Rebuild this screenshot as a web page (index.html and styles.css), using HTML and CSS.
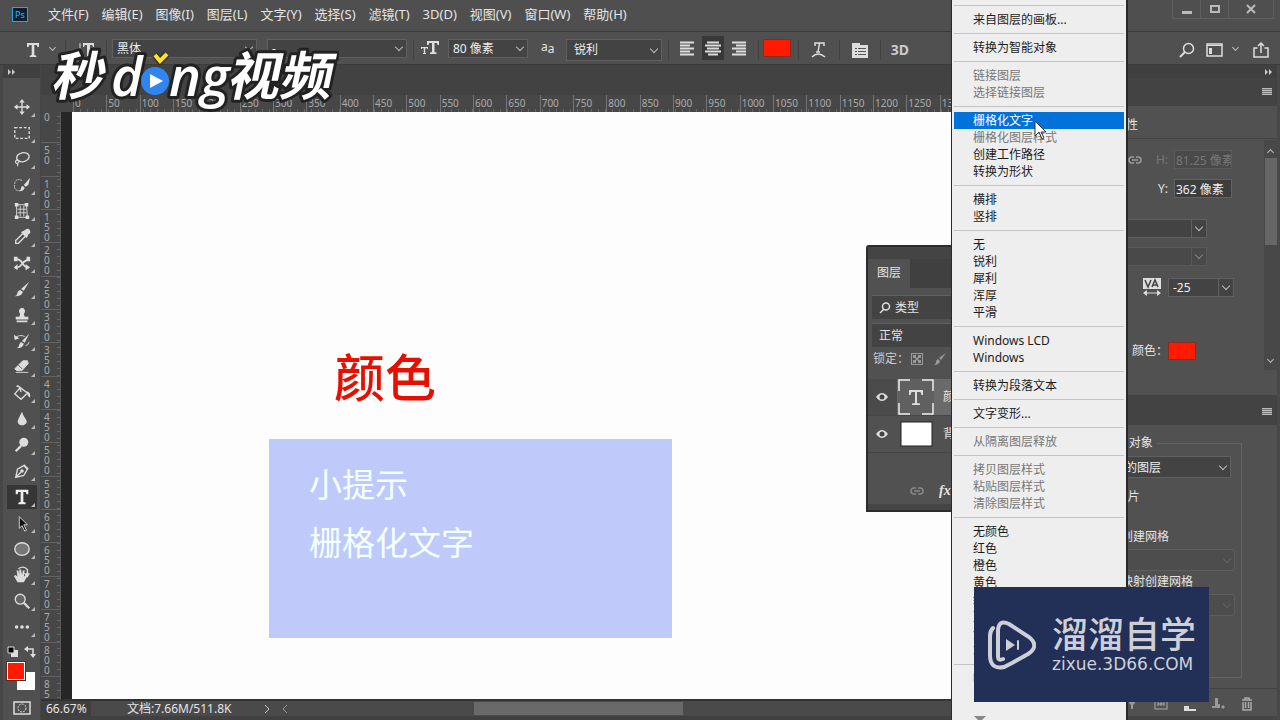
FILE: index.html
```html
<!DOCTYPE html>
<html lang="zh-CN">
<head>
    <meta charset="UTF-8">
    <meta name="viewport" content="width=device-width, initial-scale=1.0">
    <title>Photoshop</title>
    <link rel="stylesheet" href="styles.css">
</head>
<body>
    <header class="menubar">
        <div class="app-icon">Ps</div>
        <nav class="menus">
            <a href="#">文件(F)</a>
            <a href="#">编辑(E)</a>
            <a href="#">图像(I)</a>
            <a href="#">图层(L)</a>
            <a href="#">文字(Y)</a>
            <a href="#">选择(S)</a>
            <a href="#">滤镜(T)</a>
            <a href="#">3D(D)</a>
            <a href="#">视图(V)</a>
            <a href="#">窗口(W)</a>
            <a href="#">帮助(H)</a>
        </nav>
        <div class="window-buttons">
            <button aria-label="最小化"><svg width="12" height="12"><path d="M1 8h10v3H1z" fill="#bbb"/></svg></button>
            <button aria-label="最大化"><svg width="12" height="12"><rect x="2" y="3" width="8" height="6" fill="none" stroke="#bbb" stroke-width="2"/></svg></button>
            <button class="close" aria-label="关闭"><svg width="12" height="12"><path d="M2 2l8 8M10 2l-8 8" stroke="#bbb" stroke-width="2"/></svg></button>
        </div>
    </header>

    <div class="options">
        <button class="opt-tool" aria-label="文字工具"><svg width="16" height="16"><path d="M2 1h12v4h-1.500l-.8-2H9.300v10l2 .7V15H4.700v-1.300l2-.7V3H4.300l-.8 2H2z" fill="#ddd"/></svg></button>
        <i class="chevron"></i>
        <span class="sep"></span>
        <button class="opt-orient" aria-label="切换文本方向"><svg width="16" height="18"><path d="M2 2v12M0 11l2 4 2-4" fill="none" stroke="#ddd" stroke-width="1"/><path d="M5 2h11v4h-1l-.8-2H12v11h-3V4H6.800L6 6H5z" fill="#ddd"/></svg></button>
        <span class="sep"></span>
        <label class="drop font-family"><select aria-label="字体"><option>黑体</option></select></label>
        <label class="drop font-style"><select aria-label="字体样式"><option>-</option></select></label>
        <span class="sep"></span>
        <svg class="size-icon" width="18" height="16"><path d="M6 1h12v4h-1.400l-.8-2h-2.300v9l2 .6V14H9v-1.400l2-.6V3H8.300L7.500 5H6z" fill="#ddd"/><path d="M0 7h7v2H6.300L6 8.200H4.200V13H5v1H2v-1h.8V8.200H1L.7 9H0z" fill="#ddd"/></svg>
        <label class="drop font-size"><select aria-label="字号"><option>80 像素</option></select></label>
        <span class="aa">a<sub>a</sub></span>
        <label class="drop anti-alias"><select aria-label="消除锯齿"><option>锐利</option></select></label>
        <span class="sep"></span>
        <div class="align">
            <button aria-label="左对齐"><svg width="16" height="16"><path d="M1 2.500h14M1 5.500h10M1 8.500h14M1 11.500h10M1 14.500h14" stroke="#ddd" stroke-width="2"/></svg></button>
            <button class="pressed" aria-label="居中对齐"><svg width="16" height="16"><path d="M2 2.500h12M0 5.500h16M2 8.500h12M0 11.500h16M3 14.500h10" stroke="#ddd" stroke-width="2"/></svg></button>
            <button aria-label="右对齐"><svg width="16" height="16"><path d="M1 2.500h14M5 5.500h10M1 8.500h14M5 11.500h10M1 14.500h14" stroke="#ddd" stroke-width="2"/></svg></button>
        </div>
        <span class="sep"></span>
        <button class="color-box" aria-label="文本颜色"></button>
        <span class="sep"></span>
        <button class="opt-icon" aria-label="变形文字"><svg width="16" height="18"><path d="M4 5V2h9v3M8.500 2L7 11M5 11h4" fill="none" stroke="#ddd" stroke-width="1.500"/><path d="M1 16q6-6 13 0" fill="none" stroke="#ddd" stroke-width="1.500"/></svg></button>
        <span class="sep"></span>
        <button class="opt-icon" aria-label="字符面板"><svg width="18" height="18"><path d="M1 2h8v2h8v13H1z" fill="#ddd"/><path d="M4 7.500h2M7 7.500h8M4 10.500h2M7 10.500h8M4 13.500h2M7 13.500h8" stroke="#555" stroke-width="1"/></svg></button>
        <span class="sep"></span>
        <button class="opt-3d">3D</button>
        <div class="options-right">
            <button aria-label="搜索"><svg width="16" height="16"><circle cx="9.500" cy="6.500" r="5" fill="none" stroke="#ddd" stroke-width="1.500"/><path d="M6 10l-5 5" stroke="#ddd" stroke-width="2"/></svg></button>
            <button aria-label="工作区"><svg width="18" height="14"><rect x="1" y="1" width="15" height="12" fill="none" stroke="#ddd" stroke-width="1.500"/><path d="M1 2.500h15" stroke="#ddd"/><path d="M3 5h3v6H3z" fill="#ddd"/></svg></button>
            <i class="chevron"></i>
            <button aria-label="共享"><svg width="16" height="18"><path d="M4.500 7H1v9h14V7h-3.500M8 12V2M5 5l3-3 3 3" fill="none" stroke="#ddd" stroke-width="1.500"/></svg></button>
        </div>
    </div>

    <div class="workspace">
        <aside class="toolbar">
            <div class="toolbar-head"><svg width="8" height="6"><path d="M0 0l3 3-3 3zM4 0l3 3-3 3z" fill="#ccc"/></svg></div>
            <div class="tools">
                <button aria-label="移动"><svg viewBox="0 0 20 20"><path d="M10 3v14M3 10h14" stroke="#ddd" stroke-width="1.500"/><path d="M10 1l3 4H7zM10 19l3-4H7zM1 10l4-3v6zM19 10l-4-3v6z" fill="#ddd"/></svg></button>
                <button aria-label="矩形选框"><svg viewBox="0 0 20 20"><rect x="2" y="4" width="16" height="12" fill="none" stroke="#ddd" stroke-width="1.500" stroke-dasharray="3 2"/></svg></button>
                <button aria-label="套索"><svg viewBox="0 0 20 20"><ellipse cx="11" cy="8" rx="7" ry="5" fill="none" stroke="#ddd" stroke-width="1.500" transform="rotate(-12 11 8)"/><path d="M5 11q-3 1-2 3t3 0-1-3M5 14q1 2 0 4" fill="none" stroke="#ddd" stroke-width="1.300"/></svg></button>
                <button aria-label="快速选择"><svg viewBox="0 0 20 20"><path d="M10 5Q3 2 2 8t1 7q2 2 6 1" fill="none" stroke="#ddd" stroke-dasharray="2 1"/><path d="M19 2l-2 8-3 2-2-2z" fill="#ddd"/><path d="M11 11l2 2q-1 4-6 4 2-2 2-4 0-2 2-2z" fill="#ddd"/></svg></button>
                <button aria-label="透视裁剪"><svg viewBox="0 0 20 20"><path d="M4 3h11l1 14H4zM8 4v12M12 4v12M5 8h10M5 12h10" fill="none" stroke="#ddd"/><path d="M2 1h4v4H2zM13 1h4v4h-4zM2 15h4v4H2zM14 15h4v4h-4z" fill="#ddd"/></svg></button>
                <button aria-label="吸管"><svg viewBox="0 0 20 20"><path d="M11 6L3 14v3h3l8-8" fill="none" stroke="#ddd" stroke-width="1.500"/><path d="M10 4l2-1 3-2q3-1 4 2t-2 4l-1 3-1 1-6-6z" fill="#ddd"/></svg></button>
                <button aria-label="内容感知移动"><svg viewBox="0 0 20 20"><path d="M2 6h4q3 1 5 5t6 4M2 15h3q3-1 5-4t7-5" fill="none" stroke="#ddd" stroke-width="2"/><path d="M19 15l-5-4v7zM1 15l4-4v7zM1 3h4v5H1zM15 3h4v5h-4z" fill="#ddd"/></svg></button>
                <button aria-label="画笔"><svg viewBox="0 0 20 20"><path d="M18 2l-6 10-3-2z" fill="#ddd"/><path d="M8 11l3 2q-1 5-9 5 3-1 3-4 1-3 3-3z" fill="#ddd"/></svg></button>
                <button aria-label="仿制图章"><svg viewBox="0 0 20 20"><path d="M10 2a4 4 0 0 1 2 7l1 3h4v3H3v-3h4l1-3a4 4 0 0 1 2-7zM4 16h12v2H4z" fill="#ddd"/></svg></button>
                <button aria-label="历史记录画笔"><svg viewBox="0 0 20 20"><path d="M18 2l-5 10-3-2zM9 11l3 2q-1 5-8 5 3-1 3-4 1-3 2-3z" fill="#ddd"/><path d="M2 7q5-5 11-2M14 15q3 0 4-4" fill="none" stroke="#ddd"/><path d="M1 3l1 6 5-2z" fill="#ddd"/></svg></button>
                <button aria-label="橡皮擦"><svg viewBox="0 0 20 20"><path d="M11 3h5l1 3-7 8H4l-2-2zM3 16h14" fill="#ddd" stroke="#ddd"/><path d="M6 8l4 4" stroke="#555"/></svg></button>
                <button aria-label="油漆桶"><svg viewBox="0 0 20 20"><path d="M8 4l8 6-7 7-7-6zM4 3q3-3 5 6" fill="none" stroke="#ddd" stroke-width="1.500"/><path d="M15 8q5 1 4 7-3-1-4-7z" fill="#ddd"/></svg></button>
                <button aria-label="模糊"><svg viewBox="0 0 20 20"><path d="M10 2q1 4 4 8t-1 6q-3 2-6 0t-1-6 4-8z" fill="#ddd"/></svg></button>
                <button aria-label="减淡"><svg viewBox="0 0 20 20"><circle cx="12" cy="7" r="5" fill="#ddd"/><path d="M9 11l-6 6" stroke="#ddd" stroke-width="2.500"/></svg></button>
                <button aria-label="钢笔"><svg viewBox="0 0 20 20"><path d="M3 17l2-9 7-4 4 4-4 7zM12 3l5 5M3 17l6-6" fill="none" stroke="#ddd" stroke-width="1.500"/><circle cx="10" cy="10" r="2" fill="#ddd"/></svg></button>
                <button class="active" aria-label="横排文字"><svg viewBox="0 0 20 20"><path d="M3 2h14v5h-2l-.8-2.500h-2.700v11l2.500.6V18H6v-1.900l2.500-.6v-11H5.800L5 7H3z" fill="#eee"/></svg></button>
                <button aria-label="路径选择"><svg viewBox="0 0 20 20"><path d="M7 3v13l3-3 3 6 2-1-3-6h4z" fill="#111" stroke="#ddd"/></svg></button>
                <button aria-label="椭圆"><svg viewBox="0 0 20 20"><ellipse cx="10" cy="10" rx="8" ry="7" fill="#777" stroke="#ddd" stroke-width="1.500"/></svg></button>
                <button aria-label="旋转视图"><svg viewBox="0 0 20 20"><path d="M5 18l-4-7 2-1 2 2-1-7h2l1 5V4h2l1 6 1-5h2l-1 7 2-2 2 1-4 7z" fill="#ddd"/><path d="M6 3q6-4 10 1v5" fill="none" stroke="#ddd" stroke-width="1.500"/><path d="M12 8h7l-3 5z" fill="#ddd"/></svg></button>
                <button aria-label="缩放"><svg viewBox="0 0 20 20"><circle cx="8" cy="8" r="5.500" fill="#666" stroke="#ddd" stroke-width="1.500"/><path d="M12 12l6 6" stroke="#ddd" stroke-width="2.500"/></svg></button>
                <button aria-label="编辑工具栏"><svg viewBox="0 0 20 20"><circle cx="4" cy="10" r="2" fill="#ddd"/><circle cx="10" cy="10" r="2" fill="#ddd"/><circle cx="16" cy="10" r="2" fill="#ddd"/></svg></button>
            </div>
            <div class="swap">
                <svg width="12" height="12"><path d="M4 4h7v7H4z" fill="#ddd"/><path d="M1 1h6v6H1z" fill="#000" stroke="#ddd"/></svg>
                <svg width="12" height="12"><path d="M3 3h6v6" fill="none" stroke="#ddd" stroke-width="1.500"/><path d="M0 3l4-3v6zM9 12L6 8h6z" fill="#ddd"/></svg>
            </div>
            <div class="swatches">
                <button class="back" aria-label="背景色"></button>
                <button class="fore" aria-label="前景色"></button>
            </div>
            <button class="quick-mask" aria-label="快速蒙版"><svg width="18" height="14"><rect x="1" y="1" width="16" height="12" fill="none" stroke="#ddd" stroke-width="1.500"/><circle cx="9" cy="7" r="4" fill="none" stroke="#ddd" stroke-dasharray="2 1"/></svg></button>
        </aside>

        <main class="document">
            <div class="tab-strip"></div>
            <div class="ruler-x"><div class="marks" id="rulerX"></div></div>
            <div class="view">
                <div class="ruler-y"><div class="marks" id="rulerY"></div></div>
                <div class="canvas">
                    <h1 class="canvas-text">颜色</h1>
                    <section class="tip">
                        <p>小提示</p>
                        <p>栅格化文字</p>
                    </section>
                </div>
            </div>
            <footer class="status">
                <span class="zoom">66.67%</span>
                <span class="doc-size">文档:7.66M/511.8K</span>
                <svg class="next" width="6" height="10"><path d="M1 1l4 4-4 4" fill="none" stroke="#ccc"/></svg>
                <svg class="prev" width="6" height="10"><path d="M5 1L1 5l4 4" fill="none" stroke="#999"/></svg>
                <div class="scroll-x"><div class="thumb"></div></div>
            </footer>
        </main>

        <aside class="dock">
            <div class="dock-head"><svg width="8" height="6"><path d="M0 0l3 3-3 3zM4 0l3 3-3 3z" fill="#ccc"/></svg></div>
            <div class="dock-tabs"><i class="burger"></i></div>
            <h2 class="dock-title">文字图层属性</h2>
            <section class="props">
                <div class="fields">
                    <div class="row off">
                        <svg width="14" height="8"><path d="M6 1H4a3 3 0 0 0 0 6h2M8 1h2a3 3 0 0 1 0 6H8M4 4h6" fill="none" stroke="#999" stroke-width="1.500"/></svg>
                        <label for="propH">H:</label><input id="propH" value="81.25 像素" disabled>
                    </div>
                    <div class="row"><label for="propY">Y:</label><input id="propY" value="362 像素"></div>
                    <div class="row wide-row"><label class="drop boxed"><select aria-label="字体"><option></option></select></label></div>
                    <div class="row wide-row dim"><label class="drop boxed"><select aria-label="样式" disabled><option></option></select></label></div>
                    <div class="row track-row">
                        <svg width="20" height="18"><path d="M1 0h18v11H1z" fill="#ddd"/><path d="M3 2l3 7 3-7M10 9l3-7 3 7M11 7h4" fill="none" stroke="#444" stroke-width="1.500"/><path d="M2 15h16" stroke="#ddd"/><path d="M1 15l4-3v6zM19 15l-4-3v6z" fill="#ddd"/></svg>
                        <label class="drop boxed tracking"><select aria-label="字距"><option>-25</option></select></label>
                    </div>
                    <div class="row color-row"><span>颜色：</span><button class="color-box" aria-label="颜色"></button></div>
                </div>
                <div class="scroll-y"><i class="up"></i><div class="thumb"></div><i class="down"></i></div>
            </section>
            <div class="dock-tabs second"><i class="burger"></i></div>
            <section class="panel-3d">
                <fieldset>
                    <legend>新建 3D 对象</legend>
                    <label class="drop source"><select aria-label="源"><option>选中的图层</option></select></label>
                    <label class="radio first"><input type="radio" name="mesh">3D 明信片</label>
                    <label class="radio"><input type="radio" name="mesh">从预设创建网格</label>
                    <label class="drop mesh"><select aria-label="预设" disabled><option></option></select></label>
                    <label class="radio"><input type="radio" name="mesh">从深度映射创建网格</label>
                    <label class="drop mesh"><select aria-label="深度映射" disabled><option></option></select></label>
                </fieldset>
            </section>
            <div class="dock-foot">
                <svg width="14" height="14"><path d="M4 1h6v5l-2 2v4H6V8L4 6z" fill="#999"/></svg>
                <svg width="14" height="14"><rect x="1" y="1" width="12" height="11" fill="none" stroke="#aaa"/><path d="M4 4v5M7 4v5M10 4v5M4 7h6" stroke="#aaa"/></svg>
                <svg width="14" height="14"><path d="M1 9h5v3h7v2H1z" fill="#ddd"/></svg>
                <svg width="14" height="14"><path d="M3 1h3v6h2v4H0V9h3zM9 10l2-2 2 2-2 2z" fill="#999"/></svg>
                <svg width="12" height="14"><path d="M1 3h10M4 3V1h4v2M2 5v8h8V5M4.500 5v6M7.500 5v6" fill="none" stroke="#aaa" stroke-width="1.500"/></svg>
            </div>
        </aside>
    </div>

    <section class="layers">
        <div class="layers-head"></div>
        <div class="layers-tabs"><span>图层</span></div>
        <div class="filter">
            <svg width="12" height="12"><circle cx="7" cy="4.500" r="3.500" fill="none" stroke="#ddd" stroke-width="1.500"/><path d="M5 7l-4 4" stroke="#ddd" stroke-width="1.500"/></svg>
            <span>类型</span><i class="chevron"></i>
        </div>
        <div class="filter blend"><span>正常</span></div>
        <div class="lock">
            <span>锁定：</span>
            <svg width="12" height="12"><rect x=".5" y=".5" width="11" height="11" fill="none" stroke="#999"/><path d="M2 2h3v3H2zM7 2h3v3H7zM4.500 4.500h3v3h-3zM2 7h3v3H2zM7 7h3v3H7z" fill="#999"/></svg>
            <svg width="14" height="14"><path d="M13 1L8 8 6 6zM5 7l2 2q-1 4-6 4 2-1 2-3t2-3z" fill="#999"/></svg>
        </div>
        <div class="layer selected">
            <svg width="14" height="10"><path d="M1 5q6-8 12 0-6 8-12 0z" fill="#ddd"/><circle cx="7" cy="5" r="2.500" fill="#444"/></svg>
            <svg width="36" height="36"><rect width="36" height="36" fill="#606060"/><path d="M1 12V1h11M24 1h11v11M35 24v11H24M12 35H1V24" fill="none" stroke="#eee" stroke-width="1.500"/><path d="M11 11h14v5h-1.500l-1-3H19v11l3 .5V26h-8v-1.500l3-.5V13h-3.500l-1 3H11z" fill="#ddd"/></svg>
            <span>颜色</span>
        </div>
        <div class="layer">
            <svg width="14" height="10"><path d="M1 5q6-8 12 0-6 8-12 0z" fill="#ddd"/><circle cx="7" cy="5" r="2.500" fill="#444"/></svg>
            <svg width="36" height="28"><rect x="3" y="2" width="31" height="24" fill="#fff" stroke="#222"/></svg>
            <span>背景</span>
        </div>
        <div class="layers-foot">
            <svg width="14" height="8"><path d="M6 1H4a3 3 0 0 0 0 6h2M8 1h2a3 3 0 0 1 0 6H8M4 4h6" fill="none" stroke="#888" stroke-width="1.500"/></svg>
            <em>fx</em>
        </div>
    </section>

    <ul class="context-menu">
        <li class="line"></li>
        <li>来自图层的画板...</li>
        <li class="line"></li>
        <li>转换为智能对象</li>
        <li class="line"></li>
        <li class="disabled">链接图层</li>
        <li class="disabled">选择链接图层</li>
        <li class="line"></li>
        <li class="hover">栅格化文字</li>
        <li class="disabled">栅格化图层样式</li>
        <li>创建工作路径</li>
        <li>转换为形状</li>
        <li class="line"></li>
        <li>横排</li>
        <li>竖排</li>
        <li class="line"></li>
        <li>无</li>
        <li>锐利</li>
        <li>犀利</li>
        <li>浑厚</li>
        <li>平滑</li>
        <li class="line"></li>
        <li>Windows LCD</li>
        <li>Windows</li>
        <li class="line"></li>
        <li>转换为段落文本</li>
        <li class="line"></li>
        <li>文字变形...</li>
        <li class="line"></li>
        <li class="disabled">从隔离图层释放</li>
        <li class="line"></li>
        <li class="disabled">拷贝图层样式</li>
        <li class="disabled">粘贴图层样式</li>
        <li class="disabled">清除图层样式</li>
        <li class="line"></li>
        <li>无颜色</li>
        <li>红色</li>
        <li>橙色</li>
        <li>黄色</li>
        <li>绿色</li>
        <li>蓝色</li>
        <li>紫色</li>
        <li>灰色</li>
        <li class="line"></li>
        <li>明信片</li>
        <li class="more"></li>
    </ul>

    <svg class="cursor" width="14" height="20"><path d="M1 1v15l4-4 3 7 2-1-3-6h5z" fill="#fff" stroke="#333"/></svg>

    <svg class="video-logo" width="290" height="68" viewBox="0 0 290 68">
        <g class="outlined">
            <text class="cjk" x="12" y="49" transform="skewX(-12)">秒</text>
            <text class="latin" x="62" y="50">d</text>
            <text class="latin" x="120" y="50">ng</text>
            <text class="cjk" x="188" y="49" transform="skewX(-12)">视频</text>
        </g>
        <circle cx="106" cy="35" r="14" fill="#2f86f0"/>
        <path d="M101 28l13 7-13 7z" fill="#fff"/>
        <path d="M106 9l5 6 7-7" fill="none" stroke="#333" stroke-width="7"/>
        <path d="M106 9l5 6 7-7" fill="none" stroke="#ffe42b" stroke-width="4"/>
    </svg>

    <div class="watermark">
        <svg width="48" height="50" viewBox="0 0 48 50" fill="none" stroke="#cdd0d6" stroke-linecap="round">
            <path d="M4 8q-3 3-3 8v19q0 15 14 12l8-4 16-9q12-8 1-17L20 4q-10-5-11 6v27q0 4 5 2" stroke-width="4" transform="translate(1 0)"/>
            <path d="M18 19l9 6-9 6z" fill="#cdd0d6" stroke="none"/>
            <path d="M30 21v8" stroke-width="2"/>
        </svg>
        <div>
            <strong>溜溜自学</strong>
            <span>zixue.3D66.COM</span>
        </div>
    </div>

    <script>
        function buildRuler(id, count) {
            const ruler = document.getElementById(id);
            for (let i = 0; i < count; i++) {
                const mark = document.createElement('span');
                mark.textContent = i * 50;
                ruler.appendChild(mark);
            }
        }

        buildRuler('rulerX', 27);
        buildRuler('rulerY', 18);
    </script>
</body>
</html>
```
FILE: styles.css
```css
* {
    box-sizing: border-box;
}

body {
    margin: 0;
    height: 100vh;
    overflow: hidden;
    position: relative;
    display: flex;
    flex-direction: column;
    font-family: "Noto Sans", "Noto Sans CJK SC", sans-serif;
    font-size: 12px;
    line-height: 16px;
    color: #e4e4e4;
    background: #4f4f4f;
}

button {
    padding: 0;
    border: none;
    background: none;
    color: inherit;
    font: inherit;
    display: flex;
    align-items: center;
    justify-content: center;
}

svg {
    display: block;
    flex: none;
}

h1, h2, p, ul {
    margin: 0;
    padding: 0;
    font-weight: normal;
}

/* menu bar */
.menubar {
    flex: none;
    height: 32px;
    display: flex;
    align-items: center;
    padding: 0 6px 3px 12px;
    border-bottom: 1px solid #3a3a3a;
}

.app-icon {
    width: 16px;
    height: 15px;
    border: 1px solid #2fa3da;
    background: #0c1f33;
    color: #3fb4ee;
    font-size: 9px;
    line-height: 13px;
    text-align: center;
}

.menus {
    display: flex;
    gap: 13px;
    margin-left: 20px;
    font-size: 13px;
}

.menus a {
    color: #e4e4e4;
    text-decoration: none;
}

.window-buttons {
    display: flex;
    align-self: flex-start;
    margin-left: auto;
    border: 1px solid #5e5e5e;
    border-top: none;
}

.window-buttons button {
    width: 28px;
    height: 18px;
    border-right: 1px solid #5e5e5e;
}

.window-buttons .close {
    width: 44px;
    border: none;
}

/* options bar */
.options {
    flex: none;
    height: 33px;
    display: flex;
    align-items: center;
    padding: 3px 11px 0 24px;
    border-bottom: 1px solid #3c3c3c;
    background: #505050;
}

.sep {
    width: 1px;
    height: 20px;
    background: #424242;
}

.chevron, .drop::after, .scroll-y i {
    width: 5px;
    height: 5px;
    border: solid #bbb;
    border-width: 0 1px 1px 0;
    transform: rotate(45deg);
}

.opt-tool {
    width: 18px;
}

.opt-tool + .chevron {
    margin: 0 10px 4px 8px;
}

.opt-orient {
    width: 40px;
}

.drop {
    position: relative;
    display: block;
}

.drop::after {
    content: "";
    position: absolute;
    right: 5px;
    top: 50%;
    margin-top: -4px;
}

.drop select {
    display: block;
    width: 100%;
    height: 19px;
    appearance: none;
    border: 1px solid #606060;
    border-radius: 0;
    background: #434343;
    color: #eee;
    font: inherit;
    line-height: 17px;
    padding: 0 4px;
    opacity: 1;
}

.font-family,
.font-style,
.font-size {
    margin-bottom: 3px;
}

.font-family {
    width: 145px;
    margin-left: 5px;
}

.font-style {
    width: 140px;
    margin: 0 6px 3px 10px;
}

.size-icon {
    margin: 0 9px 3px 7px;
}

.font-size {
    width: 80px;
}

.aa {
    width: 38px;
    padding-left: 13px;
    line-height: 16px;
    margin-bottom: 6px;
    white-space: nowrap;
}

.aa sub {
    font-size: 12px;
    line-height: 0;
    vertical-align: -2px;
}

.anti-alias {
    width: 96px;
    margin-right: 6px;
}

.anti-alias select {
    height: 22px;
    padding-left: 7px;
}

.align {
    display: flex;
    gap: 4px;
    margin: 0 8px 3px 7px;
}

.align button {
    width: 22px;
    height: 24px;
}

.align .pressed {
    background: #383838;
}

.color-box {
    width: 28px;
    height: 18px;
    background: #ff1a00;
    border: 1px solid #8c2a1c;
}

.options > .color-box {
    margin: 0 7px 3px 4px;
}

.opt-icon {
    width: 40px;
}

.opt-3d {
    width: 38px;
    font-size: 14px;
    font-weight: bold;
    color: #ccc;
}

.options-right {
    display: flex;
    align-items: center;
    gap: 11px;
    margin-left: auto;
}

.options-right .chevron {
    margin: 0 4px 4px -2px;
}

.workspace {
    flex: 1;
    min-height: 0;
    display: flex;
}

/* toolbar */
.toolbar {
    width: 41px;
    flex: none;
    border-left: 3px solid #474747;
    border-right: 1px solid #454545;
    background: #505050;
}

.toolbar-head {
    height: 13px;
    padding: 4px 5px;
    background: #404040;
}

.tools {
    padding-top: 17px;
}

.tools button {
    position: relative;
    width: 30px;
    height: 24px;
    margin: 0 0 2px 4px;
}

.tools svg {
    width: 18px;
    height: 18px;
}

.tools button::after {
    content: "";
    position: absolute;
    right: 2px;
    bottom: 2px;
    border: 2px solid;
    border-color: transparent #bbb #bbb transparent;
}

.tools .active {
    background: #363636;
}

.swap {
    display: flex;
    gap: 5px;
    padding: 5px 4px 4px;
}

.swatches {
    height: 36px;
    padding-left: 4px;
    display: flex;
    flex-direction: row-reverse;
    justify-content: flex-end;
}

.swatches button {
    width: 18px;
    height: 18px;
}

.swatches .fore {
    z-index: 1;
    background: #ff1a00;
    border: 1px solid #fff;
    outline: 1px solid #5a2a22;
}

.swatches .back {
    margin: 10px 0 0 -8px;
    background: #fff;
}

.quick-mask {
    margin: 3px 0 0 10px;
}

/* document */
.document {
    flex: 1;
    min-width: 0;
    display: flex;
    flex-direction: column;
    background: #474747;
}

.tab-strip {
    height: 30px;
    background: #424242;
}

.ruler-x {
    height: 17px;
    overflow: hidden;
    padding-left: 32px;
    color: #aaa;
}

.marks {
    display: grid;
    font-size: 10px;
    line-height: 16px;
}

.ruler-x .marks {
    width: 900px;
    height: 17px;
    grid-template-columns: repeat(27, 1fr);
    background: repeating-linear-gradient(90deg, #666 0 1px, transparent 1px 7px) 0 100% / 100% 3px no-repeat;
}

.ruler-x span {
    border-left: 1px solid #747474;
    padding-left: 1px;
}

.view {
    flex: 1;
    min-height: 0;
    display: flex;
}

.ruler-y {
    flex: none;
    width: 20px;
    overflow: hidden;
    color: #aaa;
    border-right: 1px solid #5a5a5a;
}

.ruler-y .marks {
    height: 600px;
    margin-top: -3px;
    grid-template-rows: repeat(18, 1fr);
    background: repeating-linear-gradient(#666 0 1px, transparent 1px 7px) 100% 0 / 3px 100% no-repeat;
}

.ruler-y span {
    width: 19px;
    padding: 2px 10px 0 3px;
    border-top: 1px solid #626262;
    line-height: 10px;
    word-break: break-all;
}

.canvas {
    flex: 1;
    position: relative;
    border-left: 11px solid #262626;
    background: #fdfdfd;
}

.canvas-text {
    position: absolute;
    left: 262px;
    top: 238px;
    font-size: 51px;
    font-weight: 500;
    line-height: 54px;
    color: #e60f00;
}

.tip {
    position: absolute;
    left: 197px;
    top: 327px;
    width: 403px;
    height: 199px;
    padding: 17px 40px;
    background: #bfcafb;
    color: #f4ffff;
    font-size: 33px;
    font-weight: 300;
    line-height: 58px;
}

.status {
    flex: none;
    height: 21px;
    display: flex;
    align-items: center;
    border-top: 2px solid #333;
    border-bottom: 4px solid #404040;
    background: #4a4a4a;
    white-space: nowrap;
}

.zoom {
    flex: none;
    width: 50px;
    padding-left: 5px;
    background: #3f3f3f;
}

.doc-size {
    flex: none;
    width: 173px;
    padding-left: 36px;
}

.prev {
    margin: 0 6px 0 12px;
}

.scroll-x {
    flex: 1;
    padding-left: 180px;
}

.scroll-x .thumb {
    width: 209px;
    height: 13px;
    background: #696969;
}

/* right dock */
.dock {
    flex: none;
    width: 250px;
    display: flex;
    flex-direction: column;
    border-right: 3px solid #484848;
    background: #515151;
}

.dock-head {
    height: 13px;
    padding: 4px 4px 0 0;
    background: #404040;
    display: flex;
    justify-content: flex-end;
}

.dock-tabs {
    height: 28px;
    padding: 10px 5px;
    background: #434343;
}

.burger {
    display: block;
    width: 10px;
    height: 7px;
    margin-left: auto;
    background: repeating-linear-gradient(#bbb 0 1px, #777 1px 2px);
}

.dock-title {
    height: 33px;
    padding: 11px 0 0 36px;
    border-bottom: 1px solid #454545;
    font-size: 12px;
}

.props {
    display: flex;
    justify-content: space-between;
    height: 256px;
    padding-top: 1px;
}

.fields {
    width: 206px;
    padding-top: 5px;
}

.row {
    display: flex;
    align-items: center;
    justify-content: flex-end;
    height: 29px;
    padding-right: 4px;
}

.row input {
    width: 58px;
    height: 19px;
    margin-left: 6px;
    padding: 0 0 0 1px;
    border: 1px solid #626262;
    background: #3d3d3d;
    color: #eee;
    font: inherit;
}

.off svg {
    margin-right: 14px;
}

.off, .row.off input {
    color: #777;
}

.row.off input {
    background: #4a4a4a;
    border-color: #5a5a5a;
}

.wide-row {
    height: 28px;
    padding-right: 29px;
    margin-top: 11px;
}

.dim {
    margin-top: 0;
    opacity: .5;
}

.wide-row .drop {
    width: 160px;
}

.boxed select {
    background: linear-gradient(#606060, #606060) right 14px top 0 / 1px 100% no-repeat #434343;
}

.track-row {
    height: 34px;
    padding-right: 2px;
}

.tracking {
    width: 66px;
    margin-left: 6px;
}

.color-row {
    margin-top: 30px;
    height: 34px;
    padding-right: 40px;
}

.scroll-y {
    width: 13px;
    height: 230px;
    display: flex;
    flex-direction: column;
    align-items: center;
    background: #484848;
}

.scroll-y .thumb {
    width: 12px;
    height: 87px;
    background: #666;
}

.scroll-y .up {
    margin: 10px 0 3px;
    transform: rotate(225deg);
}

.scroll-y .down {
    margin: auto 0 8px;
}

.second {
    height: 30px;
    padding-top: 13px;
}

.panel-3d {
    flex: 1;
    padding: 10px 35px 10px 30px;
}

.panel-3d fieldset {
    height: 100%;
    margin: 0;
    padding: 5px 6px 0 8px;
    border: 1px solid #636363;
}

.panel-3d legend {
    margin-left: 10px;
    padding: 0 4px;
}

.source {
    width: 135px;
    margin: 0 4px 0 auto;
}

.source select {
    height: 22px;
}

.radio {
    display: flex;
    align-items: center;
    gap: 4px;
    height: 22px;
    margin-bottom: 1px;
}

.radio input {
    width: 12px;
    height: 12px;
    margin: 0;
}

.radio.first {
    margin: 8px 0 18px;
}

.mesh select {
    height: 22px;
    background: #4d4d4d;
    border-color: #5d5d5d;
    border-radius: 3px;
}

.mesh::after {
    opacity: .2;
}

.dock-foot {
    height: 32px;
    display: flex;
    justify-content: flex-end;
    gap: 15px;
    padding: 8px 24px 0 0;
    border-top: 1px solid #424242;
    border-bottom: 4px solid #454545;
}

/* floating layers panel */
.layers {
    position: absolute;
    left: 866px;
    top: 245px;
    width: 200px;
    border: 2px solid #2c2c2c;
    border-radius: 3px 0 0 0;
    background: #515151;
}

.layers-head {
    height: 12px;
    background: #444;
}

.layers-tabs {
    height: 29px;
    background: #404040;
}

.layers-tabs span {
    display: inline-block;
    height: 29px;
    padding: 6px 9px;
    background: #515151;
}

.filter {
    height: 24px;
    margin: 7px 0 4px 4px;
    display: flex;
    align-items: center;
    gap: 4px;
    padding-left: 7px;
    background: #434343;
    border-top: 1px solid #606060;
}

.filter .chevron {
    margin: 0 0 4px 32px;
}

.blend {
    margin: 0 0 0 4px;
}

.lock {
    display: flex;
    align-items: center;
    gap: 10px;
    height: 32px;
    padding: 0 0 8px 5px;
    color: #ccc;
}

.lock span {
    width: 28px;
    white-space: nowrap;
}

.layer {
    height: 37px;
    display: flex;
    align-items: center;
    gap: 9px;
    padding-left: 7px;
    border-bottom: 1px solid #464646;
}

.selected {
    background: linear-gradient(90deg, #4b4b4b 29px, #6a6a6a 29px);
}

.layers-foot {
    height: 57px;
    display: flex;
    align-items: flex-end;
    gap: 15px;
    padding: 0 0 5px 42px;
    border-bottom: 6px solid #454545;
}

.layers-foot svg {
    margin-bottom: 4px;
}

.layers-foot em {
    font: italic bold 14px/16px "Liberation Serif", serif;
}

/* context menu */
.context-menu {
    position: absolute;
    left: 951px;
    top: 0;
    bottom: 0;
    width: 177px;
    padding: 0 2px;
    border: solid #2a2a2a;
    border-width: 0 2px 0 1px;
    background: #eee;
    color: #1c1c1c;
    list-style: none;
    overflow: hidden;
}

.context-menu li {
    height: 17px;
    line-height: 17px;
    padding-left: 19px;
}

.context-menu .line {
    height: 11px;
    padding: 0;
    background: linear-gradient(#c4c4c4, #c4c4c4) 0 5px / 100% 1px no-repeat;
}

.context-menu .disabled {
    color: #777;
}

.context-menu .hover {
    background: #0072d9;
    color: #fff;
}

.context-menu .more {
    width: 0;
    height: 0;
    padding: 0;
    margin: 29px 0 0 20px;
    border: solid transparent;
    border-width: 6px 6px 0;
    border-top-color: #888;
}

.cursor {
    position: absolute;
    left: 1034px;
    top: 120px;
}

/* logos */
.video-logo {
    position: absolute;
    left: 49px;
    top: 46px;
}

.outlined {
    fill: #fff;
    stroke: #222;
    stroke-width: 6px;
    stroke-linejoin: round;
    paint-order: stroke;
}

.outlined .cjk {
    font: bold 52px "Noto Sans CJK SC", sans-serif;
}

.outlined .latin {
    font: italic 600 54px "Open Sans", sans-serif;
}

.watermark {
    position: absolute;
    left: 974px;
    top: 587px;
    width: 235px;
    height: 115px;
    display: flex;
    align-items: center;
    gap: 16px;
    padding-left: 14px;
    background: #222f57;
    color: #cdd0d6;
}

.watermark strong {
    display: block;
    font-size: 36px;
    line-height: 38px;
    font-weight: 500;
}

.watermark span {
    display: block;
    font: 17px/20px "DejaVu Sans", sans-serif;
}
```
